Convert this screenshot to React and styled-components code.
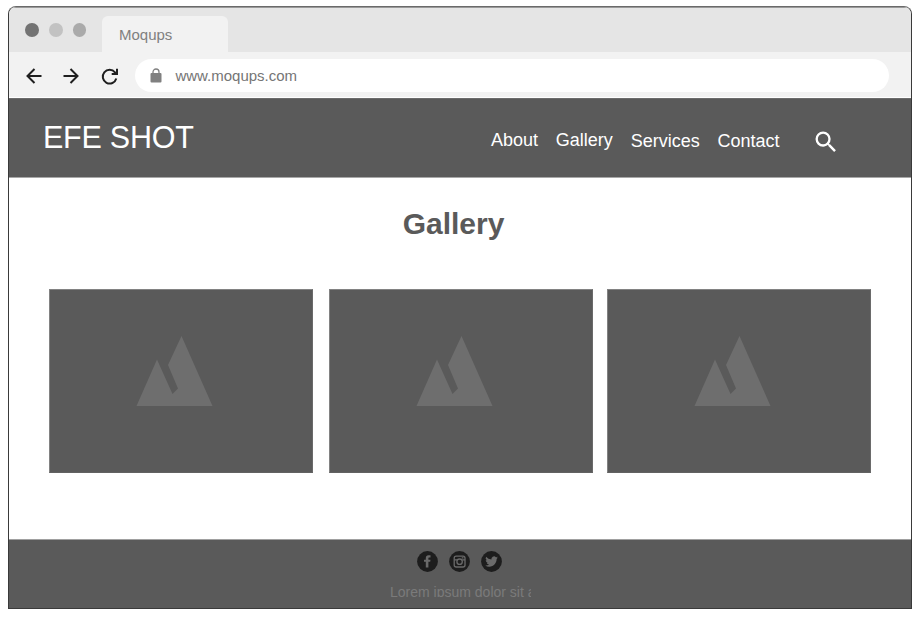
import React from "react";
import styled, { createGlobalStyle } from "styled-components";

const GlobalStyle = createGlobalStyle`
  * { box-sizing: border-box; }
  body {
    margin: 0;
    background: #fff;
    font-family: "Liberation Sans", Arial, sans-serif;
    overflow: hidden;
  }
  svg { display: block; flex: none; }
`;

const Page = styled.div`
  padding: 6px 0 0 8px;
  height: 617px;
`;

const Window = styled.div`
  width: 904px;
  height: 603px;
  border: 1px solid #3a3a3a;
  border-top-color: #6a6a6a;
  border-radius: 8px 8px 0 0;
  overflow: hidden;
  display: flex;
  flex-direction: column;
  background: #fff;
`;

const TabStrip = styled.div`
  height: 45px;
  flex: none;
  display: flex;
  align-items: flex-end;
  background: #e5e5e5;
  border-top: 1px solid #9a9a9a;
  padding-left: 16px;
`;

const Lights = styled.div`
  display: flex;
  gap: 10px;
  width: 77px;
  padding-bottom: 15px;
`;

const Light = styled.span`
  width: 13.8px;
  height: 13.8px;
  border-radius: 50%;
  background: ${(p) => p.$tone};
`;

const Tab = styled.div`
  width: 126px;
  height: 36px;
  border-radius: 6px 6px 0 0;
  background: #f2f2f2;
  padding-left: 17px;
  font-size: 15px;
  line-height: 37px;
  color: #808080;
`;

const Toolbar = styled.div`
  height: 46px;
  flex: none;
  display: flex;
  align-items: center;
  background: #f2f2f2;
  border-bottom: 1px solid #fff;
  padding: 2px 22px 0 13px;
`;

const NavIcons = styled.div`
  display: flex;
  gap: 13px;
  width: 113px;
  padding-top: 1px;
`;

const Address = styled.div`
  flex: 1;
  height: 33px;
  border-radius: 17px;
  background: #fff;
  display: flex;
  align-items: center;
  gap: 13.4px;
  padding-left: 15px;
  font-size: 15px;
  color: #757575;
`;

const Header = styled.header`
  height: 80px;
  flex: none;
  display: flex;
  align-items: flex-start;
  background: #5a5a5a;
  border-top: 1px solid #6c6c6c;
  border-bottom: 1px solid #a8a8a8;
  padding-left: 34px;
  color: #fff;
`;

const Brand = styled.div`
  width: 448px;
  padding-top: 20px;
  font-size: 30.5px;
  line-height: 36px;
  letter-spacing: -0.25px;
`;

const Menu = styled.nav`
  display: flex;
  gap: 17.8px;
  padding-top: 31px;
  width: 321px;
`;

const MenuLink = styled.a`
  font-size: 18px;
  line-height: 20px;
  padding-top: ${(p) => (p.$lowered ? "1px" : "0")};
`;

const SearchButton = styled.div`
  padding-top: 29px;
`;

const Main = styled.main`
  height: 361px;
  flex: none;
  padding: 28px 0 0 40px;
`;

const Title = styled.h1`
  margin: 0 0 47px;
  width: 809px;
  text-align: center;
  font-size: 30px;
  line-height: 36px;
  color: #5a5a5a;
`;

const Gallery = styled.div`
  display: grid;
  grid-template-columns: 264px 264px 264px;
  column-gap: 15px;
`;

const Photo = styled.div`
  height: 184px;
  background: #5a5a5a;
  border: 1px solid #828282;
  border-right-color: #6a6a6a;
  border-bottom-color: #626262;
  padding: 46px 0 0 86px;
  margin-left: ${(p) => p.$nudge || 0}px;
  width: 264px;
`;

const Footer = styled.footer`
  flex: 1;
  background: #5a5a5a;
  border-top: 1px solid #a0a0a0;
  display: flex;
  flex-direction: column;
  padding-top: 11px;
`;

const Socials = styled.div`
  display: flex;
  gap: 11px;
  padding-left: 408px;
`;

const Caption = styled.div`
  margin: 11px 0 0 381px;
  width: 141px;
  height: 14px;
  overflow: hidden;
  white-space: nowrap;
  font-size: 14px;
  line-height: 18px;
  color: #7b7b7b;
`;

const Stroke = ({ children }) => (
  <svg width="24" height="24" viewBox="0 0 24 24" fill="none" stroke="#1f1f1f" strokeWidth="2">
    {children}
  </svg>
);

const Mountain = () => (
  <svg width="77" height="70" viewBox="0 0 77 70" fill="#6e6e6e">
    <path d="M0.5 70 L21 23.5 L36.5 58 L42 52.5 L32 29 L45.5 0 L76.5 70Z" />
  </svg>
);

const Disc = ({ children }) => (
  <svg width="21" height="21" viewBox="0 0 21 21">
    <circle cx="10.5" cy="10.5" r="10.4" fill="#1d1d1d" />
    {children}
  </svg>
);

const links = [
  { label: "About" },
  { label: "Gallery" },
  { label: "Services", lowered: true },
  { label: "Contact", lowered: true },
];

export default function App() {
  return (
    <Page>
      <GlobalStyle />
      <Window>
        <TabStrip>
          <Lights>
            <Light $tone="#737373" />
            <Light $tone="#c2c2c2" />
            <Light $tone="#aaaaaa" />
          </Lights>
          <Tab>Moqups</Tab>
        </TabStrip>
        <Toolbar>
          <NavIcons>
            <Stroke><path d="M19.5 12H5.5M12.5 5l-7 7 7 7" /></Stroke>
            <Stroke><path d="M4.5 12h14M11.5 5l7 7-7 7" /></Stroke>
            <Stroke>
              <path d="M20.3 14.5A6.9 6.9 0 1 1 19 8.300l1 1.2M21 4.8v5.2h-5.300" />
            </Stroke>
          </NavIcons>
          <Address>
            <svg width="12" height="16" viewBox="0 0 12 16">
              <rect x="0.5" y="5" width="11" height="9.5" rx="1" fill="#808080" />
              <path d="M3 6V4a3 3 0 0 1 6 0v2" fill="none" stroke="#808080" strokeWidth="1.3" />
            </svg>
            www.moqups.com
          </Address>
        </Toolbar>
        <Header>
          <Brand>EFE SHOT</Brand>
          <Menu>
            {links.map((l) => (
              <MenuLink key={l.label} $lowered={l.lowered}>{l.label}</MenuLink>
            ))}
          </Menu>
          <SearchButton>
            <svg width="28" height="28" viewBox="0 0 24 24" fill="#fff">
              <path d="M15.5 14h-.79l-.28-.27A6.47 6.47 0 0 0 16 9.5 6.5 6.5 0 1 0 9.5 16c1.61 0 3.09-.59 4.23-1.57l.27.28v.79l5 4.990L20.49 19zm-6 0A4.5 4.5 0 1 1 14 9.500 4.5 4.5 0 0 1 9.5 14z" />
            </svg>
          </SearchButton>
        </Header>
        <Main>
          <Title>Gallery</Title>
          <Gallery>
            <Photo><Mountain /></Photo>
            <Photo $nudge={1}><Mountain /></Photo>
            <Photo><Mountain /></Photo>
          </Gallery>
        </Main>
        <Footer>
          <Socials>
            <Disc>
              <path fill="#6a6a6a" d="M8.8 16.5v-5.7H7V8.7h1.8V7.2C8.8 5.3 9.8 4.3 11.5 4.3h2v2.2h-1.2c-.7 0-.9.3-.9.9v1.3h2.1l-.3 2.1h-1.8v5.7z" />
            </Disc>
            <Disc>
              <g fill="none" stroke="#6a6a6a" strokeWidth="1.3">
                <rect x="5.2" y="5.2" width="10.8" height="10.8" rx="2" />
                <circle cx="10.6" cy="10.7" r="2.7" />
                <path d="M5.2 8.9h2.9M13.2 8.9H16M12.8 6.8h1.7" />
              </g>
            </Disc>
            <Disc>
              <path fill="#6a6a6a" transform="translate(4.2 4.2) scale(.53)" d="M23.95 4.57a10 10 0 0 1-2.82.77 4.96 4.96 0 0 0 2.16-2.72 9.9 9.9 0 0 1-3.13 1.18 4.92 4.92 0 0 0-8.38 4.48A13.93 13.93 0 0 1 1.64 3.16a4.92 4.92 0 0 0 1.52 6.57 4.9 4.9 0 0 1-2.23-.61v.06a4.92 4.92 0 0 0 3.95 4.83 5 5 0 0 1-2.21.08 4.94 4.94 0 0 0 4.6 3.42A9.87 9.87 0 0 1 0 19.54a14 14 0 0 0 7.55 2.21c9.05 0 14-7.5 14-13.98l-.02-.63a9.94 9.94 0 0 0 2.42-2.57z" />
            </Disc>
          </Socials>
          <Caption>Lorem ipsum dolor sit amet</Caption>
        </Footer>
      </Window>
    </Page>
  );
}
